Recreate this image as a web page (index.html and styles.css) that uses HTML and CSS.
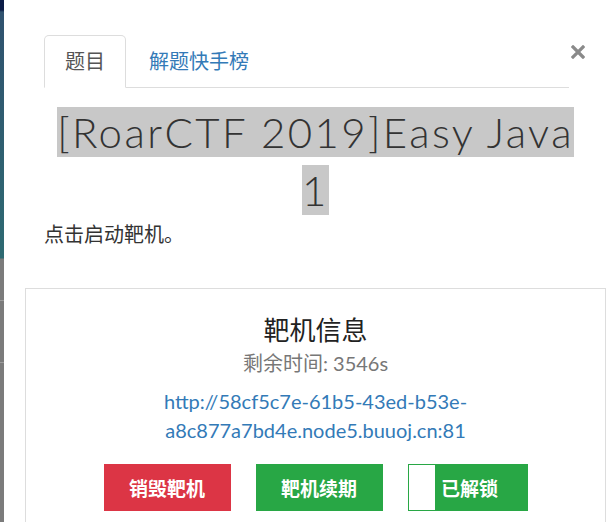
FILE: index.html
```html
<!DOCTYPE html>
<html lang="zh-CN">
<head>
<meta charset="utf-8">
<title>题目</title>
<link rel="stylesheet" href="styles.css">
</head>
<body>
<div class="page">
  <div class="backdrop-strip"><span class="strip-line one"></span><span class="strip-line two"></span></div>
  <div class="modal">
    <div class="modal-head">
      <ul class="tabs">
        <li class="tab active">题目</li>
        <li class="tab">解题快手榜</li>
      </ul>
      <button class="close" aria-label="关闭">
        <svg width="14" height="14" viewBox="0 0 14 14"><path d="M2 2 L12 12 M12 2 L2 12" stroke="#8a8a8a" stroke-width="3.2" stroke-linecap="square"/></svg>
      </button>
    </div>
    <h1 class="title"><span class="sel">[RoarCTF 2019]Easy Java 1</span></h1>
    <p class="desc">点击启动靶机。</p>
    <div class="card">
      <h3 class="card-title">靶机信息</h3>
      <div class="muted">剩余时间: 3546s</div>
      <a class="link" href="#">http://58cf5c7e-61b5-43ed-b53e-a8c877a7bd4e.node5.buuoj.cn:81</a>
      <div class="actions">
        <button class="btn danger">销毁靶机</button>
        <button class="btn success">靶机续期</button>
        <button class="btn success toggle"><span class="knob"></span><span class="btn-label">已解锁</span></button>
      </div>
    </div>
  </div>
</div>
</body>
</html>
```

FILE: styles.css
```css
html, body {
  margin: 0;
  padding: 0;
  height: 100%;
  overflow: hidden;
  background: #fff;
}

body {
  font-family: "Lato", "Noto Sans CJK SC", sans-serif;
  color: #333;
}

.page {
  display: flex;
  height: 100%;
}

.backdrop-strip {
  width: 4px;
  flex: none;
  position: relative;
  background: linear-gradient(to bottom, #0b1c47 0, #0b1c47 10px, #30526f 12px, #2e6a72 258px, #7b7b7b 259px, #7b7b7b 100%);
}

.strip-line {
  position: absolute;
  left: 0;
  width: 4px;
  height: 1px;
  background: #9c9c9c;
}
.strip-line.one { top: 300px; }
.strip-line.two { top: 362px; }

.modal {
  flex: 1;
  padding: 35px 6px 0 21px;
}

.modal-head {
  display: flex;
  align-items: flex-start;
  margin-left: 19px;
}

.tabs {
  flex: 1;
  display: flex;
  list-style: none;
  margin: 0;
  padding: 0;
  border-bottom: 1px solid #ddd;
}

.tab {
  font-size: 20px;
  line-height: 29px;
  padding: 11px 20px 11px;
  margin-right: 2px;
  margin-bottom: -1px;
  border: 1px solid transparent;
  border-radius: 5px 5px 0 0;
  color: #337ab7;
}

.tab.active {
  color: #555;
  background: #fff;
  border-color: #ddd #ddd transparent;
}

.close {
  width: 37px;
  flex: none;
  background: none;
  border: 0;
  padding: 10px 0 0 2px;
  display: flex;
  justify-content: flex-start;
}

.title {
  margin: 15px 0 0;
  padding: 0 20px;
  text-align: center;
  font-family: "Lato", sans-serif;
  font-weight: 300;
  font-size: 42px;
  line-height: 58px;
  color: #333;
  letter-spacing: 2.4px;
}

.sel {
  background: #c8c8c8;
}

.desc {
  margin: 1px 0 0 19px;
  font-size: 20px;
  line-height: 28.6px;
}

.card {
  margin-top: 39px;
  border: 1px solid #ddd;
  min-height: 320px;
  padding-top: 27px;
  text-align: center;
  display: flex;
  flex-direction: column;
  align-items: center;
}

.card-title {
  margin: 0;
  font-weight: 400;
  font-size: 26px;
  line-height: 29px;
  color: #222;
}

.muted {
  margin-top: 4px;
  font-size: 20px;
  line-height: 28.6px;
  color: #777;
}

.link {
  margin-top: 10px;
  max-width: 400px;
  font-size: 20px;
  line-height: 28.6px;
  color: #337ab7;
  text-decoration: none;
}

.actions {
  margin-top: 20px;
  display: flex;
  gap: 25px;
}

.btn {
  height: 47px;
  width: 127px;
  border: 0;
  font-family: "Noto Sans CJK SC", sans-serif;
  font-weight: 700;
  font-size: 19px;
  color: #fff;
  padding: 0;
  display: flex;
  align-items: center;
  justify-content: center;
}

.danger { background: #dc3545; }
.success { background: #28a745; }

.toggle {
  width: 120px;
  border: 1px solid #28a745;
  justify-content: flex-start;
  align-items: stretch;
}

.knob {
  width: 26px;
  background: #fff;
  flex: none;
}

.btn-label {
  flex: 1;
  display: flex;
  align-items: center;
  justify-content: center;
  padding-right: 22px;
}
```
